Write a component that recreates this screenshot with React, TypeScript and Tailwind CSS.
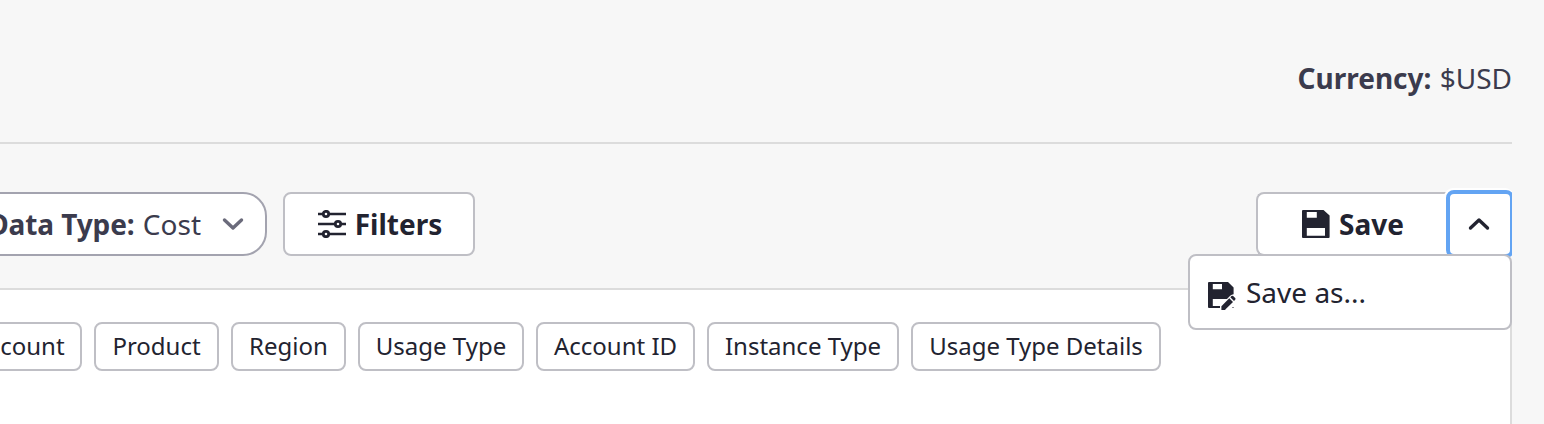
import type { ReactNode } from "react";

function SlidersIcon() {
  return (
    <svg width="28" height="28" viewBox="0 0 28 28" fill="none" stroke="#222330" className="shrink-0">
      <path d="M0 4h4.500M11.500 4H28M0 14h16.500M23.500 14H28M0 24h4.500M11.500 24H28" strokeWidth="2.700" />
      <circle cx="8" cy="4" r="2.700" strokeWidth="2.800" />
      <circle cx="20" cy="14" r="2.700" strokeWidth="2.800" />
      <circle cx="8" cy="24" r="2.700" strokeWidth="2.800" />
    </svg>
  );
}

function SaveIcon() {
  return (
    <svg width="28" height="28" viewBox="0 0 28 28" fill="#222330" className="shrink-0">
      <path
        fillRule="evenodd"
        d="M1 0H21.500L27.600 5.600V27Q27.600 28 26.600 28H1Q0 28 0 27V1Q0 0 1 0ZM4.800 2V7.800H14.800V2ZM4.800 18V25.800H23V18Z"
      />
    </svg>
  );
}

function SaveAsIcon() {
  return (
    <svg width="28" height="28" viewBox="0 0 28 28" fill="#222330" className="shrink-0">
      <path
        fillRule="evenodd"
        d="M1 0H20L25.600 5.400V12.200Q23.700 12.200 22.200 13.700L19 16.900H4.800V24H12V26H1Q0 26 0 25V1Q0 0 1 0ZM4.800 2V7.200H14V2Z"
      />
      <path d="M21.300 16.200L25 19.900L17.800 27.100L17 28H13.400V24.200ZM22.300 15.200L23.500 14Q24.300 13.400 25.100 14L27.200 16.100Q27.900 16.900 27.200 17.700L26 18.900Z" />
      <path d="M24.500 25h1v1h-1z" />
    </svg>
  );
}

function Chevron({ up = false, color }: { up?: boolean; color: string }) {
  return (
    <svg width="22" height="14" viewBox="0 0 22 14" fill="none" stroke={color} strokeWidth="3.400" strokeLinecap="round" strokeLinejoin="round" className="shrink-0">
      <path d={up ? "M2.500 11L11 3L19.500 11" : "M2.500 3L11 11L19.500 3"} />
    </svg>
  );
}

function Chip({ className, children }: { className: string; children: ReactNode }) {
  return (
    <button className={`flex h-[49px] shrink-0 items-center justify-center whitespace-nowrap rounded-lg border-2 border-[#bfbfc5] bg-white pb-0.5 text-2xl text-[#222330] ${className}`}>
      {children}
    </button>
  );
}

export default function App() {
  return (
    <div className="h-[424px] w-[1544px] overflow-hidden bg-[#f7f7f7] pr-8 font-['Noto_Sans',sans-serif] text-[28px] leading-[38px] text-[#3b3b4d]">
      <div className="h-full overflow-hidden">
        <header className="flex h-36 justify-end border-b-2 border-[#dcdcdc] pt-[59px]">
          <p>
            <b className="mr-px font-bold">Currency:</b> $USD
          </p>
        </header>
        <div className="flex h-36 items-start justify-between pt-12">
          <div className="flex gap-4">
            <button className="-ml-10 flex h-16 w-[307px] items-center justify-end gap-[21px] whitespace-nowrap rounded-[24px] border-2 border-[#a3a3af] bg-white pr-[21px]">
              <span>
                <b className="mr-px font-bold tracking-[-0.1px]">Data Type:</b> Cost
              </span>
              <Chevron color="#6b6b7b" />
            </button>
            <button className="flex h-16 w-48 items-center justify-center gap-[9px] rounded-lg border-2 border-[#bfbfc5] bg-white pl-0.5 font-bold text-[#222330]">
              <SlidersIcon />
              Filters
            </button>
          </div>
          <div className="relative flex">
            <button className="flex h-16 w-48 items-center justify-center gap-[9px] rounded-l-lg border-2 border-r-0 border-[#bfbfc5] bg-white font-bold text-[#222330]">
              <SaveIcon />
              Save
            </button>
            <button className="-mt-0.5 -mr-0.5 -ml-0.5 flex h-[68px] w-[68px] items-center justify-center rounded-lg border-4 border-[#63a4f3] bg-white pr-0.5 shadow-[-1px_-1px_0_1px_#ffffff]">
              <Chevron up color="#222330" />
            </button>
            <div className="absolute top-[62px] right-0 z-10 flex h-[76px] w-[324px] items-center gap-[10px] rounded-lg border-2 border-[#bfbfc5] bg-white pl-[18px] text-[#222330]">
              <span className="pt-2">
                <SaveAsIcon />
              </span>
              <span>Save as...</span>
            </div>
          </div>
        </div>
        <main className="h-[136px] border-t-2 border-r-2 border-[#dcdcdc] bg-white pt-8">
          <div className="-ml-11 flex gap-3">
            <Chip className="w-[126px]">Account</Chip>
            <Chip className="w-[125px]">Product</Chip>
            <Chip className="w-[115px]">Region</Chip>
            <Chip className="w-[166px]">Usage Type</Chip>
            <Chip className="w-[159px]">Account ID</Chip>
            <Chip className="w-[192px]">Instance Type</Chip>
            <Chip className="w-[250px]">Usage Type Details</Chip>
          </div>
        </main>
      </div>
    </div>
  );
}
